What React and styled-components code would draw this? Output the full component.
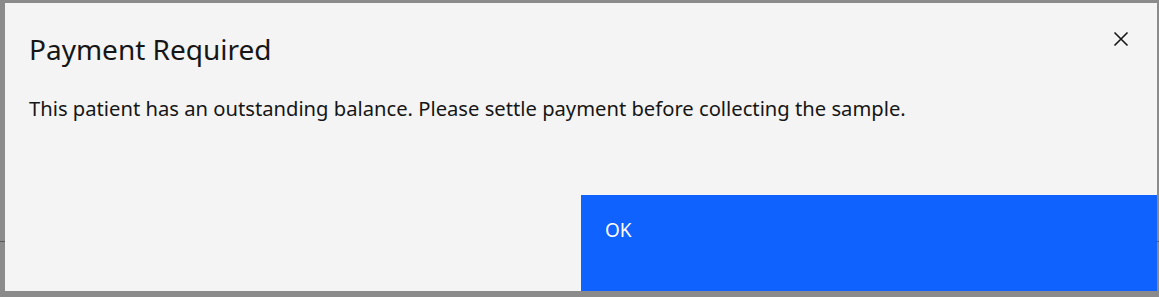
import React from "react";
import styled, { createGlobalStyle } from "styled-components";

const GlobalStyle = createGlobalStyle`
  html, body {
    margin: 0;
    padding: 0;
    background: #8b8b8b;
    font-family: "Noto Sans", "Open Sans", sans-serif;
  }
`;

const Overlay = styled.div`
  position: relative;
  width: 1159px;
  height: 297px;
  box-sizing: border-box;
  padding: 3px 2px 6px 5px;
  display: flex;
`;

const BackdropLine = styled.div`
  position: absolute;
  left: 0;
  right: 0;
  top: 241px;
  height: 1px;
  background: #5a5a5a;
`;

const Modal = styled.div`
  position: relative;
  z-index: 1;
  flex: 1;
  background: #f4f4f4;
  display: flex;
  flex-direction: column;
  color: #161616;
`;

const Header = styled.div`
  display: flex;
  justify-content: space-between;
  align-items: flex-start;
  padding: 26px 24px 0 24px;
`;

const Title = styled.h2`
  margin: 0;
  font-size: 28px;
  font-weight: 400;
  line-height: 40px;
`;

const CloseButton = styled.button`
  border: none;
  background: transparent;
  padding: 0;
  width: 32px;
  height: 32px;
  display: flex;
  align-items: center;
  justify-content: center;
  margin-top: -6px;
  margin-right: -4px;
  cursor: pointer;
`;

const Body = styled.p`
  margin: 0;
  padding: 24px 24px 0 24px;
  font-size: 20.2px;
  line-height: 30px;
  flex: 1;
`;

const Footer = styled.div`
  display: flex;
  justify-content: flex-end;
  height: 96px;
`;

const PrimaryButton = styled.button`
  width: 50%;
  border: none;
  background: #0f62fe;
  color: #ffffff;
  font-family: inherit;
  font-size: 19px;
  display: flex;
  align-items: flex-start;
  padding: 22px 24px 0 24px;
  cursor: pointer;
`;

export default function App() {
  return (
    <>
      <GlobalStyle />
      <Overlay>
        <BackdropLine />
        <Modal>
          <Header>
            <Title>Payment Required</Title>
            <CloseButton aria-label="Close">
              <svg width="16" height="16" viewBox="0 0 16 16">
                <path d="M1.5 1.5 L14.5 14.5 M14.5 1.5 L1.5 14.5" stroke="#161616" strokeWidth="1.6" />
              </svg>
            </CloseButton>
          </Header>
          <Body>
            This patient has an outstanding balance. Please settle payment before collecting the sample.
          </Body>
          <Footer>
            <PrimaryButton>OK</PrimaryButton>
          </Footer>
        </Modal>
      </Overlay>
    </>
  );
}
